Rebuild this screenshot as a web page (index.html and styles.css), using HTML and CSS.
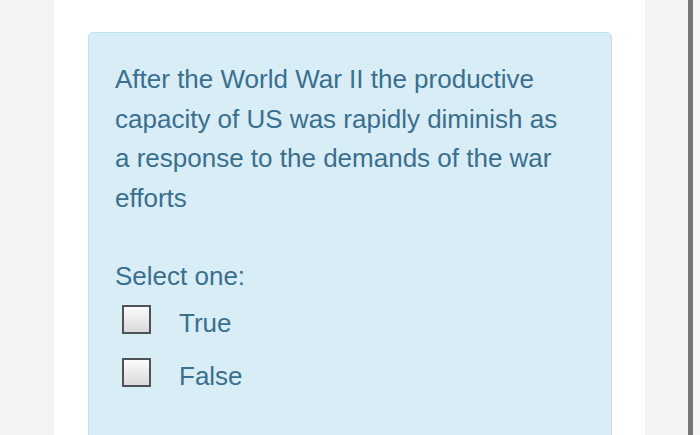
FILE: index.html
```html
<!DOCTYPE html>
<html>
<head>
<meta charset="utf-8">
<link rel="stylesheet" href="styles.css">
</head>
<body>
<div class="page">
  <div class="gutter-left"></div>
  <div class="column">
    <div class="card">
      <p class="question">After the World War II the productive capacity of US was rapidly diminish as a response to the demands of the war efforts</p>
      <p class="prompt">Select one:</p>
      <div class="options">
        <label class="option"><span class="box"></span><span class="label">True</span></label>
        <label class="option"><span class="box"></span><span class="label">False</span></label>
      </div>
    </div>
  </div>
  <div class="gutter-right"></div>
  <div class="scrollbar"></div>
  <div class="edge"></div>
</div>
</body>
</html>
```

FILE: styles.css
```css
html, body {
  margin: 0;
  padding: 0;
  height: 100%;
  overflow: hidden;
}
body {
  background: #f3f3f3;
  font-family: "Liberation Sans", Arial, Helvetica, sans-serif;
}
.page {
  display: flex;
  height: 435px;
  width: 700px;
  overflow: hidden;
}
.gutter-left {
  width: 54px;
  flex: none;
  background: #f3f3f3;
}
.column {
  width: 591px;
  flex: none;
  background: #ffffff;
  padding: 32px 0 0 34px;
  box-sizing: border-box;
}
.card {
  width: 524px;
  height: 420px;
  box-sizing: border-box;
  background: #d9edf7;
  border: 1px solid #bfe0ef;
  border-radius: 5px;
  padding: 27px 26px 0 26px;
  color: #3a6f8e;
}
.question {
  margin: 0;
  font-size: 26px;
  line-height: 39.5px;
  width: 455px;
}
.prompt {
  margin: 39px 0 0 0;
  font-size: 26px;
  line-height: 39.5px;
}
.options {
  display: flex;
  flex-direction: column;
  gap: 23px;
  margin-top: 8px;
  padding-left: 7px;
}
.option {
  display: flex;
  align-items: center;
  height: 30px;
}
.box {
  width: 29px;
  height: 29px;
  box-sizing: border-box;
  border: 2px solid #4f5356;
  background: linear-gradient(#fbfbfb, #d9dadc);
  flex: none;
}
.label {
  margin-left: 28px;
  margin-top: 8px;
  font-size: 26px;
}
.gutter-right {
  width: 43px;
  flex: none;
  background: #f3f3f3;
}
.scrollbar {
  width: 5px;
  flex: none;
  background: #777777;
}
.edge {
  flex: 1;
  background: #f6f6f6;
}
```
